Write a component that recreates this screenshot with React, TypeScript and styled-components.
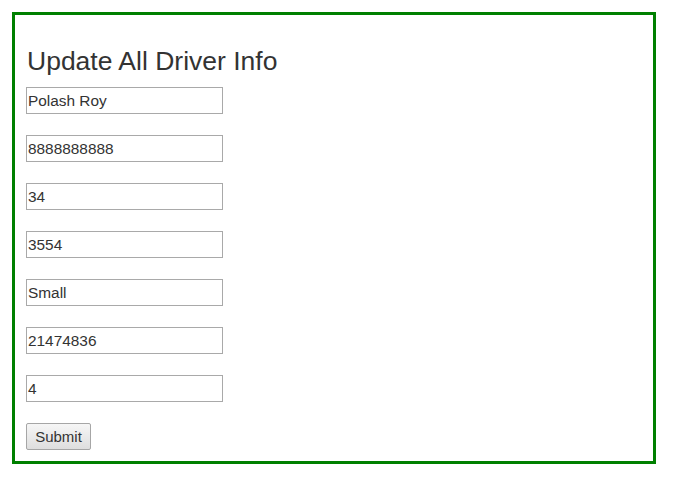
import React from "react";
import styled, { createGlobalStyle } from "styled-components";

const Global = createGlobalStyle`
  html, body { margin: 0; padding: 0; background: #fff; }
  body { font-family: "Liberation Sans", Arial, sans-serif; color: #333; }
`;

const Page = styled.div`
  padding: 12px;
`;

const Panel = styled.div`
  box-sizing: border-box;
  width: 644px;
  height: 452px;
  border: 3px solid #008000;
  padding: 0 11px;
`;

const Title = styled.h3`
  margin: 33px 0 12px 1px;
  font-size: 26.5px;
  line-height: 27px;
  font-weight: 400;
  color: #333;
`;

const Form = styled.form`
  display: flex;
  flex-direction: column;
  align-items: flex-start;
  gap: 21px;
`;

const Field = styled.input`
  box-sizing: border-box;
  width: 197px;
  height: 27px;
  margin: 0;
  padding: 1px 1px;
  border: 1px solid #a9a9a9;
  border-radius: 0;
  font-family: "Liberation Sans", Arial, sans-serif;
  font-size: 15.4px;
  color: #333;
  background: #fff;
  outline: none;
`;

const Button = styled.button`
  box-sizing: border-box;
  width: 65px;
  height: 27px;
  margin: 0;
  padding: 0;
  border: 1px solid #a6a6a6;
  border-radius: 2px;
  background: linear-gradient(#f6f6f6, #dedede);
  font-family: "Liberation Sans", Arial, sans-serif;
  font-size: 15px;
  color: #333;
`;

const values = ["Polash Roy", "8888888888", "34", "3554", "Small", "21474836", "4"];

export default function App() {
  return (
    <>
      <Global />
      <Page>
        <Panel>
          <Title>Update All Driver Info</Title>
          <Form onSubmit={(e) => e.preventDefault()}>
            {values.map((v, i) => (
              <Field key={i} defaultValue={v} />
            ))}
            <Button type="submit">Submit</Button>
          </Form>
        </Panel>
      </Page>
    </>
  );
}
